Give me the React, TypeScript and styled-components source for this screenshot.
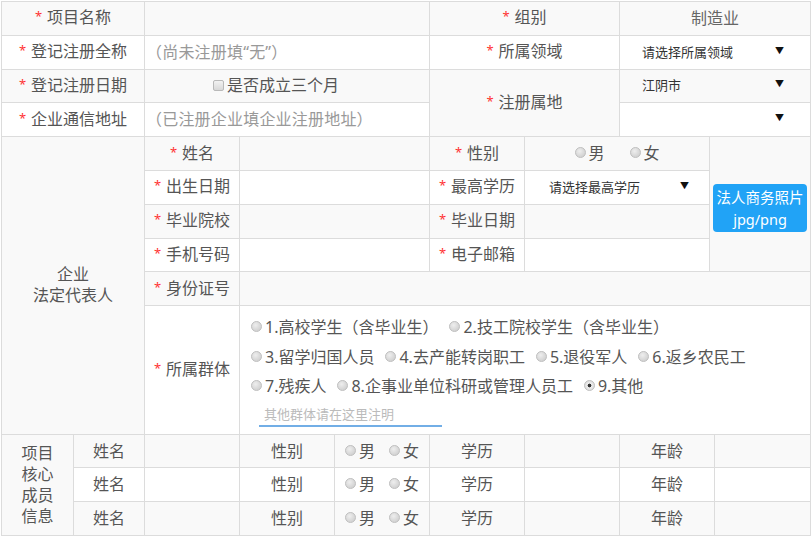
import React from 'react';
import styled, { createGlobalStyle, css } from 'styled-components';

const GlobalStyle = createGlobalStyle`
    html, body {
        margin: 0;
        padding: 0;
        background: #fff;
    }
    body {
        font-family: "Noto Sans", "Noto Sans CJK SC", sans-serif;
        color: #555;
    }
`;

const Page = styled.div`
    padding: 1px 0 0 1px;
    width: 810px;
`;

const FormTable = styled.table`
    width: 809px;
    table-layout: fixed;
    border-collapse: collapse;
    font-size: 16px;
    color: #555;

    tr:nth-child(odd) > td {
        background: #f9f9f9;
    }
    tr:nth-child(even) > td {
        background: #fff;
    }
`;

const Row = styled.tr<{ $tall?: boolean }>`
    height: ${p => (p.$tall ? 128.5 : 33.8)}px;
`;

const Cell = styled.td<{ $align?: 'left' | 'center'; $pad?: number; $muted?: boolean }>`
    border: 1px solid #dcdcdc;
    padding: 0 ${p => p.$pad ?? 6}px;
    text-align: ${p => p.$align ?? 'center'};
    vertical-align: middle;
    line-height: 21px;
    white-space: nowrap;
    ${p =>
        p.$muted &&
        css`
            color: #666;
        `}
`;

const Star = styled.span`
    color: #f33;
    font-size: 13px;
    position: relative;
    top: -2px;
    margin-right: 5px;
`;

const Placeholder = styled.span`
    color: #999;
    letter-spacing: 0.2px;
`;

const Select = styled.div<{ $left: number; $right: number }>`
    display: flex;
    justify-content: space-between;
    align-items: center;
    padding: 0 ${p => p.$right}px 0 ${p => p.$left}px;
    font-size: 13px;
    color: #333;
    text-align: left;
`;

const Caret = styled.span`
    font-size: 9px;
    color: #111;
    position: relative;
    top: -2px;
`;

const CheckBox = styled.span`
    display: inline-block;
    width: 9px;
    height: 9px;
    border: 1px solid #b9b9b9;
    border-radius: 2px;
    background: linear-gradient(#f2f2f2, #d8d8d8);
    margin-right: 3px;
    position: relative;
    top: -2px;
    vertical-align: middle;
`;

const RadioDot = styled.span<{ $checked?: boolean }>`
    display: inline-block;
    width: 9px;
    height: 9px;
    border: 1px solid #c0c0c0;
    border-radius: 50%;
    background: ${p =>
        p.$checked
            ? 'radial-gradient(circle, #333 0, #333 1.6px, #eee 2.2px, #d2d2d2 100%)'
            : 'radial-gradient(circle at 40% 35%, #eeeeee, #c8c8c8)'};
    margin-right: 3px;
    position: relative;
    top: -1px;
    flex-shrink: 0;
`;

const RadioGroup = styled.div<{ $gap: number }>`
    display: flex;
    justify-content: center;
    align-items: center;
    gap: ${p => p.$gap}px;
`;

const RadioOption = styled.label`
    display: inline-flex;
    align-items: center;
`;

const GroupBox = styled.div`
    display: flex;
    flex-direction: column;
    padding-left: 5px;
`;

const GroupLine = styled.div`
    display: flex;
    align-items: center;
    gap: 11px;
    height: 29.5px;
`;

const NoteInput = styled.div`
    width: 178px;
    margin: 2px 0 0 8px;
    padding: 0 0 1px 5px;
    border-bottom: 2px solid #72aee6;
    font-size: 13px;
    line-height: 20px;
    color: #bbb;
`;

const PhotoButton = styled.div`
    width: 94px;
    height: 48px;
    margin: 0 auto;
    position: relative;
    top: 4px;
    border-radius: 4px;
    background: #21a3f6;
    color: #fff;
    font-size: 14.5px;
    line-height: 22px;
    display: flex;
    flex-direction: column;
    justify-content: center;
    align-items: center;
`;

const Label = ({ children }: { children: React.ReactNode }) => (
    <>
        <Star>*</Star>
        {children}
    </>
);

const Radio = ({ text, checked }: { text: string; checked?: boolean }) => (
    <RadioOption>
        <RadioDot $checked={checked} />
        {text}
    </RadioOption>
);

const groups = [
    ['1.高校学生（含毕业生）', '2.技工院校学生（含毕业生）'],
    ['3.留学归国人员', '4.去产能转岗职工', '5.退役军人', '6.返乡农民工'],
    ['7.残疾人', '8.企事业单位科研或管理人员工', '9.其他'],
];

const colWidths = [72, 71, 95, 95, 95, 95, 95, 90, 5, 96];

const MemberRow = ({ first }: { first?: boolean }) => (
    <Row>
        {first && (
            <Cell rowSpan={3} $pad={0}>
                项目
                <br />
                核心
                <br />
                成员
                <br />
                信息
            </Cell>
        )}
        <Cell>姓名</Cell>
        <Cell />
        <Cell>性别</Cell>
        <Cell $pad={0}>
            <RadioGroup $gap={14}>
                <Radio text="男" />
                <Radio text="女" />
            </RadioGroup>
        </Cell>
        <Cell>学历</Cell>
        <Cell />
        <Cell colSpan={2}>年龄</Cell>
        <Cell />
    </Row>
);

export default function App() {
    return (
        <Page>
            <GlobalStyle />
            <FormTable>
                <colgroup>
                    {colWidths.map((w, i) => (
                        <col key={i} style={{ width: w }} />
                    ))}
                </colgroup>
                <tbody>
                    <Row>
                        <Cell colSpan={2}>
                            <Label>项目名称</Label>
                        </Cell>
                        <Cell colSpan={3} />
                        <Cell colSpan={2}>
                            <Label>组别</Label>
                        </Cell>
                        <Cell colSpan={3} $muted>
                            制造业
                        </Cell>
                    </Row>
                    <Row>
                        <Cell colSpan={2}>
                            <Label>登记注册全称</Label>
                        </Cell>
                        <Cell colSpan={3} $align="left" $pad={1}>
                            <Placeholder>（尚未注册填“无”）</Placeholder>
                        </Cell>
                        <Cell colSpan={2}>
                            <Label>所属领域</Label>
                        </Cell>
                        <Cell colSpan={3} $pad={0}>
                            <Select $left={22} $right={26}>
                                请选择所属领域
                                <Caret>▼</Caret>
                            </Select>
                        </Cell>
                    </Row>
                    <Row>
                        <Cell colSpan={2}>
                            <Label>登记注册日期</Label>
                        </Cell>
                        <Cell colSpan={3} style={{ paddingRight: 28 }}>
                            <CheckBox />
                            是否成立三个月
                        </Cell>
                        <Cell colSpan={2} rowSpan={2}>
                            <Label>注册属地</Label>
                        </Cell>
                        <Cell colSpan={3} $pad={0}>
                            <Select $left={22} $right={26}>
                                江阴市
                                <Caret>▼</Caret>
                            </Select>
                        </Cell>
                    </Row>
                    <Row>
                        <Cell colSpan={2}>
                            <Label>企业通信地址</Label>
                        </Cell>
                        <Cell colSpan={3} $align="left" $pad={1}>
                            <Placeholder>（已注册企业填企业注册地址）</Placeholder>
                        </Cell>
                        <Cell colSpan={3} $pad={0}>
                            <Select $left={22} $right={26}>
                                <span />
                                <Caret>▼</Caret>
                            </Select>
                        </Cell>
                    </Row>
                    <Row>
                        <Cell colSpan={2} rowSpan={6}>
                            企业
                            <br />
                            法定代表人
                        </Cell>
                        <Cell>
                            <Label>姓名</Label>
                        </Cell>
                        <Cell colSpan={2} />
                        <Cell>
                            <Label>性别</Label>
                        </Cell>
                        <Cell colSpan={2} $pad={0}>
                            <RadioGroup $gap={25}>
                                <Radio text="男" />
                                <Radio text="女" />
                            </RadioGroup>
                        </Cell>
                        <Cell colSpan={2} rowSpan={4} $pad={0}>
                            <PhotoButton>
                                <span>法人商务照片</span>
                                <span>jpg/png</span>
                            </PhotoButton>
                        </Cell>
                    </Row>
                    <Row>
                        <Cell>
                            <Label>出生日期</Label>
                        </Cell>
                        <Cell colSpan={2} />
                        <Cell>
                            <Label>最高学历</Label>
                        </Cell>
                        <Cell colSpan={2} $pad={0}>
                            <Select $left={24} $right={20}>
                                请选择最高学历
                                <Caret>▼</Caret>
                            </Select>
                        </Cell>
                    </Row>
                    <Row>
                        <Cell>
                            <Label>毕业院校</Label>
                        </Cell>
                        <Cell colSpan={2} />
                        <Cell>
                            <Label>毕业日期</Label>
                        </Cell>
                        <Cell colSpan={2} />
                    </Row>
                    <Row>
                        <Cell>
                            <Label>手机号码</Label>
                        </Cell>
                        <Cell colSpan={2} />
                        <Cell>
                            <Label>电子邮箱</Label>
                        </Cell>
                        <Cell colSpan={2} />
                    </Row>
                    <Row>
                        <Cell>
                            <Label>身份证号</Label>
                        </Cell>
                        <Cell colSpan={7} />
                    </Row>
                    <Row $tall>
                        <Cell>
                            <Label>所属群体</Label>
                        </Cell>
                        <Cell colSpan={7} $align="left">
                            <GroupBox>
                                {groups.map((line, i) => (
                                    <GroupLine key={i}>
                                        {line.map(t => (
                                            <Radio key={t} text={t} checked={t === '9.其他'} />
                                        ))}
                                    </GroupLine>
                                ))}
                                <NoteInput>其他群体请在这里注明</NoteInput>
                            </GroupBox>
                        </Cell>
                    </Row>
                    <MemberRow first />
                    <MemberRow />
                    <MemberRow />
                </tbody>
            </FormTable>
        </Page>
    );
}
